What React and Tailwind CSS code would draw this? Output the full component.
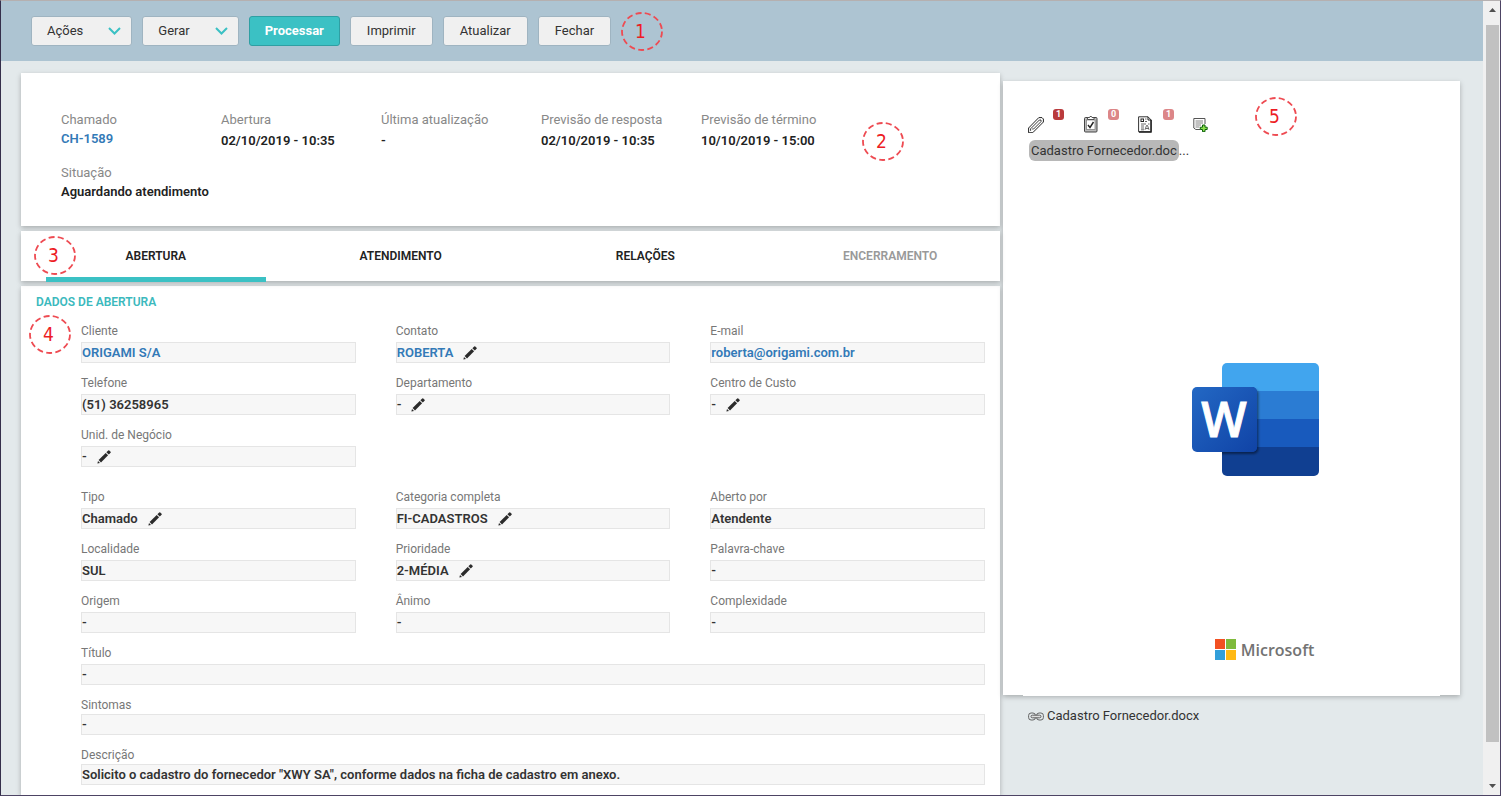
import clsx from 'clsx'

const SUMMARY = [
  { label: 'Chamado', value: 'CH-1589', href: '#chamado' },
  { label: 'Abertura', value: '02/10/2019 - 10:35' },
  { label: 'Última atualização', value: '-' },
  { label: 'Previsão de resposta', value: '02/10/2019 - 10:35' },
  { label: 'Previsão de término', value: '10/10/2019 - 15:00' },
]

const TABS = [
  { label: 'ABERTURA', active: true },
  { label: 'ATENDIMENTO' },
  { label: 'RELAÇÕES' },
  { label: 'ENCERRAMENTO', disabled: true },
]

const CONTACT_FIELDS = [
  { label: 'Cliente', value: 'ORIGAMI S/A', href: '#cliente' },
  { label: 'Contato', value: 'ROBERTA', href: '#contato', editable: true },
  { label: 'E-mail', value: 'roberta@origami.com.br', href: 'mailto:roberta@origami.com.br' },
  { label: 'Telefone', value: '(51) 36258965' },
  { label: 'Departamento', value: '-', editable: true },
  { label: 'Centro de Custo', value: '-', editable: true },
  { label: 'Unid. de Negócio', value: '-', editable: true },
]

const TICKET_FIELDS = [
  { label: 'Tipo', value: 'Chamado', editable: true },
  { label: 'Categoria completa', value: 'FI-CADASTROS', editable: true },
  { label: 'Aberto por', value: 'Atendente' },
  { label: 'Localidade', value: 'SUL' },
  { label: 'Prioridade', value: '2-MÉDIA', editable: true },
  { label: 'Palavra-chave', value: '-' },
  { label: 'Origem', value: '-' },
  { label: 'Ânimo', value: '-' },
  { label: 'Complexidade', value: '-' },
]

const CARD = 'relative bg-white shadow-[0_2px_5px_rgba(0,0,0,0.26)]'

function Marker({ n, className }) {
  return (
    <svg width="42" height="39" viewBox="0 0 42 39" className={className} role="img" aria-label={`Item ${n}`}>
      <ellipse cx="21" cy="19.5" rx="20" ry="18.5" fill="none" stroke="#ee4b52" strokeWidth="1.8" strokeDasharray="6 3.3" />
      <text x="19.5" y="26" textAnchor="middle" fontSize="19" fontFamily="'DejaVu Sans Condensed', 'DejaVu Sans', sans-serif" fill="#ed1c24">{n}</text>
    </svg>
  )
}

function ToolbarButton({ children, menu, primary }) {
  return (
    <button
      type="button"
      className={clsx(
        'flex h-[30px] items-center rounded-[3px] border text-[13px]',
        primary ? 'border-[#2f9fa3] bg-[#3bc1c4] px-[15px] font-bold text-white' : 'border-[#9fb4c1] bg-[#f0f0f0] text-[#333]',
        menu && 'gap-[25px] pr-2.5 pl-[15px]',
        !menu && !primary && 'px-4',
      )}
    >
      {children}
      {menu && (
        <svg width="13" height="8" viewBox="0 0 13 8" fill="none" stroke="#3bc1c4" strokeWidth="2">
          <path d="M1 1 6.5 6.5 12 1" />
        </svg>
      )}
    </button>
  )
}

function PencilIcon() {
  return (
    <svg width="14" height="14" viewBox="0 0 14 14" fill="#2b2b2b">
      <path d="M0.4 13.6 1 11 3 13z" />
      <path d="M1.6 10 8.7 2.9 11.1 5.3 4 12.4z" />
      <path d="M9.4 2.2 11.2 0.4 12 0.2 13.8 2 13.6 2.8 11.8 4.6z" />
    </svg>
  )
}

function Field({ label, value, href, editable, tight }) {
  return (
    <div className={clsx('flex flex-col', tight ? 'gap-px' : 'gap-[3px]')}>
      <dt className="text-xs leading-4 text-[#777]">{label}</dt>
      <dd className="flex h-[21px] items-center gap-2.5 border border-[#e5e5e5] bg-[#f7f7f7] text-[13px] font-semibold text-[#333]">
        {href ? <a href={href} className="text-[#337ab7]">{value}</a> : value}
        {editable && <button type="button" aria-label={`Editar ${label}`}><PencilIcon /></button>}
      </dd>
    </div>
  )
}

function ClipIcon() {
  return (
    <svg width="16" height="16" viewBox="0 0 16 16" fill="none" stroke="#222" strokeLinejoin="round" strokeLinecap="round">
      <path d="M.6 15.4V11L10.8.6H14L15.4 2V5L5 15.4z" />
      <path d="M2.6 13.4V11.8L11.4 3H13V4.6L5.6 12H4.6" strokeWidth=".9" />
    </svg>
  )
}

function ClipboardIcon() {
  return (
    <svg width="16" height="17" viewBox="0 0 16 17" fill="none">
      <rect x="1.5" y="1.5" width="12.5" height="14.5" rx="1" fill="#bbb" stroke="#444" />
      <rect x="3.5" y="4" width="8.5" height="9.5" fill="#fff" stroke="#777" strokeWidth=".7" />
      <path d="M4.5 3.5V1.5h2L7 .5h1.5l.5 1h2v2z" fill="#fff" stroke="#444" strokeWidth=".9" />
      <path d="m5 9 2 2.5L10.5 6" stroke="#222" strokeWidth="1.4" />
    </svg>
  )
}

function ReportIcon() {
  return (
    <svg width="14" height="17" viewBox="0 0 14 17" fill="none">
      <path d="M.6.8H10L13.2 4V15.8H.6z" fill="#fff" stroke="#333" />
      <path d="M10 .8V4h3.2" stroke="#222" />
      <path d="M13 4v12H1" stroke="#222" strokeWidth="1.4" />
      <rect x="3" y="3" width="2.5" height="2.5" stroke="#222" />
      <path d="M7 3h1.5M7 5.5h2M3 8h5M10 8h1.5M3 10h3M3 12h3M3 13.8h3M7 13.8 8.5 9.5h1L11 13.8M8 12.5h2.5" stroke="#444" strokeWidth=".8" />
    </svg>
  )
}

function AddNoteIcon() {
  return (
    <svg width="15" height="15" viewBox="0 0 15 15" fill="none">
      <path d="M12 7V1.5H.8V11l2 1.5H7" stroke="#555" fill="#fff" />
      <path d="M2.5 4h7.5M2.5 6h7.5M2.5 8h5.5M2.5 10h4" stroke="#777" strokeWidth=".9" />
      <path d="M9.5 8h2.5v2.2h2.2v2.3H12v2.2H9.5v-2.2H7.3v-2.3h2.2z" fill="#8be04a" stroke="#0a5f0a" />
    </svg>
  )
}

function WordLogo() {
  return (
    <svg width="128" height="114" viewBox="0 0 128 114" role="img" aria-label="Word">
      <defs>
        <clipPath id="page"><rect x="30" y="0" width="97" height="113" rx="5" /></clipPath>
        <linearGradient id="tile" x1="0" y1="0" x2="1" y2="1">
          <stop offset="0" stopColor="#2368c4" />
          <stop offset="1" stopColor="#1043a6" />
        </linearGradient>
        <filter id="tileShadow" x="-10%" y="-10%" width="125%" height="125%">
          <feDropShadow dx="1.5" dy="2" stdDeviation="1.2" floodOpacity=".45" />
        </filter>
      </defs>
      <g clipPath="url(#page)">
        <rect x="30" width="97" height="28" fill="#41a5ee" />
        <rect x="30" y="28" width="97" height="28" fill="#2b7cd3" />
        <rect x="30" y="56" width="97" height="28" fill="#185abd" />
        <rect x="30" y="84" width="97" height="29" fill="#103f91" />
        <rect x="0" y="24" width="65" height="65" rx="5" fill="#1043a6" filter="url(#tileShadow)" />
      </g>
      <rect x="0" y="24" width="65" height="65" rx="5" fill="url(#tile)" />
      <text x="32" y="74" textAnchor="middle" fontSize="48" fontWeight="600" fontFamily="'Open Sans', sans-serif" fill="#fff" stroke="#fff">W</text>
    </svg>
  )
}

function MicrosoftLogo() {
  return (
    <div className="flex items-center gap-1 pl-[18px]">
      <svg width="22" height="21" viewBox="0 0 22 21">
        <rect width="10" height="10" fill="#f25022" />
        <rect x="11" width="10" height="10" fill="#7fba3c" />
        <rect y="11" width="10" height="10" fill="#329fda" />
        <rect x="11" y="11" width="10" height="10" fill="#ffb914" />
      </svg>
      <span className="font-['Open_Sans',sans-serif] text-base leading-5 font-semibold text-[#737373]">Microsoft</span>
    </div>
  )
}

function LinkIcon() {
  return (
    <svg width="16" height="9" viewBox="0 0 16 9" fill="none" stroke="#555" strokeWidth=".9">
      <rect x=".6" y="1" width="6.8" height="7" rx="2.5" />
      <rect x="8.6" y="1" width="6.8" height="7" rx="2.5" />
      <rect x="3" y="3.2" width="10" height="2.6" rx="1.3" fill="#ddd" />
    </svg>
  )
}

function Badge({ children, strong }) {
  return (
    <span className={clsx(
      'absolute -top-[7px] left-[25px] flex size-[11px] items-center justify-center rounded-[3px] text-[9px] font-bold text-white',
      strong ? 'bg-[#b93a3c]' : 'bg-[#dc8688]',
    )}>
      {children}
    </span>
  )
}

function AttachmentTool({ label, icon, count, strong }) {
  return (
    <button type="button" aria-label={label} className="relative flex h-[17px] w-[55px] items-center">
      {icon}
      {count !== undefined && <Badge strong={strong}>{count}</Badge>}
    </button>
  )
}

function Scrollbar() {
  return (
    <div className="flex w-[17px] shrink-0 flex-col items-center bg-[#f0f0f0] pl-px" aria-hidden="true">
      <svg width="7" height="24" viewBox="0 0 7 24" fill="#505050"><path d="M0 11h7L3.5 7z" /></svg>
      <div className="w-[13px] flex-[717] bg-[#c1c1c1]" />
      <div className="flex-[37]" />
      <svg width="7" height="16" viewBox="0 0 7 16" fill="#505050"><path d="M0 5h7L3.5 9z" /></svg>
    </div>
  )
}

export default function App() {
  return (
    <div className="flex h-screen overflow-hidden border border-t-[#b5b0b0] border-r-[#4d4464] border-b-[#4d4464] border-l-[#352f4b] bg-[#e3e9eb] font-[Roboto,sans-serif]">
      <div className="flex min-w-0 flex-1 flex-col">
        <header className="flex h-[60px] shrink-0 items-center gap-2.5 bg-[#adc4d2] pl-[30px]">
          <ToolbarButton menu>Ações</ToolbarButton>
          <ToolbarButton menu>Gerar</ToolbarButton>
          <ToolbarButton primary>Processar</ToolbarButton>
          <ToolbarButton>Imprimir</ToolbarButton>
          <ToolbarButton>Atualizar</ToolbarButton>
          <ToolbarButton>Fechar</ToolbarButton>
          <Marker n={1} />
        </header>

        <div className="flex min-h-0 flex-1 gap-[3px] pt-3 pr-[23px] pl-5">
          <main className="flex min-w-0 flex-1 flex-col gap-[5px]">
            <section className={clsx(CARD, 'h-[153px] shrink-0 px-10 pt-[38px]')}>
              <dl className="grid grid-cols-[repeat(5,160px)] gap-y-[13px] text-[13px] leading-5">
                {SUMMARY.map((s) => (
                  <div key={s.label}>
                    <dt className="leading-[18px] text-[#888]">{s.label}</dt>
                    <dd className={clsx('font-semibold', s.href ? 'text-[#337ab7]' : 'pt-0.5 text-[#222]')}>
                      {s.href ? <a href={s.href}>{s.value}</a> : s.value}
                    </dd>
                  </div>
                ))}
                <div>
                  <dt className="leading-[18px] text-[#888]">Situação</dt>
                  <dd className="font-semibold whitespace-nowrap text-[#222]">Aguardando atendimento</dd>
                </div>
              </dl>
              <Marker n={2} className="absolute top-[49px] left-[841px]" />
            </section>

            <nav className={clsx(CARD, 'z-10 grid h-[50px] shrink-0 grid-cols-4 gap-x-[25px] pl-[25px]')}>
              {TABS.map((t) => (
                <button
                  key={t.label}
                  type="button"
                  disabled={t.disabled}
                  className={clsx('relative text-xs font-semibold', t.disabled ? 'text-[#999]' : 'text-[#222]')}
                >
                  {t.label}
                  {t.active && <span className="absolute inset-x-0 -bottom-px h-[5px] bg-[#3bc1c4]" />}
                </button>
              ))}
              <Marker n={3} className="absolute top-[5px] left-[13px]" />
            </nav>

            <section className={clsx(CARD, 'min-h-0 flex-1 pt-2 pr-[15px]')}>
              <h2 className="pl-[15px] text-xs leading-4 font-semibold text-[#3bb9bd]">DADOS DE ABERTURA</h2>
              <Marker n={4} className="absolute top-[29px] left-2" />
              <div className="flex flex-col gap-[22px] pt-[13px] pl-[60px]">
                <dl className="grid grid-cols-3 gap-x-10 gap-y-3">
                  {CONTACT_FIELDS.map((f) => <Field key={f.label} {...f} />)}
                </dl>
                <dl className="grid grid-cols-3 gap-x-10 gap-y-3">
                  {TICKET_FIELDS.map((f) => <Field key={f.label} {...f} />)}
                  <div className="col-span-3 flex flex-col gap-3">
                    <Field label="Título" value="-" />
                    <Field label="Sintomas" value="-" tight />
                    <Field label="Descrição" value={'Solicito o cadastro do fornecedor "XWY SA", conforme dados na ficha de cadastro em anexo.'} tight />
                  </div>
                </dl>
              </div>
            </section>
          </main>

          <aside className="w-[457px] shrink-0 pt-2">
            <section className={clsx(CARD, 'flex h-[614px] flex-col pt-[35px]')}>
              <div className="flex pl-[25px]">
                <AttachmentTool label="Anexos" icon={<ClipIcon />} count={1} strong />
                <AttachmentTool label="Tarefas" icon={<ClipboardIcon />} count={0} />
                <AttachmentTool label="Relatórios" icon={<ReportIcon />} count={1} />
                <AttachmentTool label="Adicionar nota" icon={<AddNoteIcon />} />
              </div>
              <div className="flex pt-[7px] pl-[26px] text-[13px] leading-[21px] text-[#333]">
                <span className="rounded-md bg-[#b8b8b8] px-0.5">Cadastro Fornecedor.doc</span>...
              </div>
              <div className="flex flex-1 flex-col items-center justify-end pb-[35px] pl-12">
                <WordLogo />
                <div className="h-[162px]" />
                <MicrosoftLogo />
              </div>
              <div className="absolute inset-x-5 -bottom-px h-px bg-white" />
              <Marker n={5} className="absolute top-4 left-[252px]" />
            </section>
            <a href="#anexo" className="flex items-center gap-[3px] pt-3 pl-[25px] text-[13px] leading-[18px] text-[#333]">
              <LinkIcon />
              Cadastro Fornecedor.docx
            </a>
          </aside>
        </div>
      </div>
      <Scrollbar />
    </div>
  )
}
